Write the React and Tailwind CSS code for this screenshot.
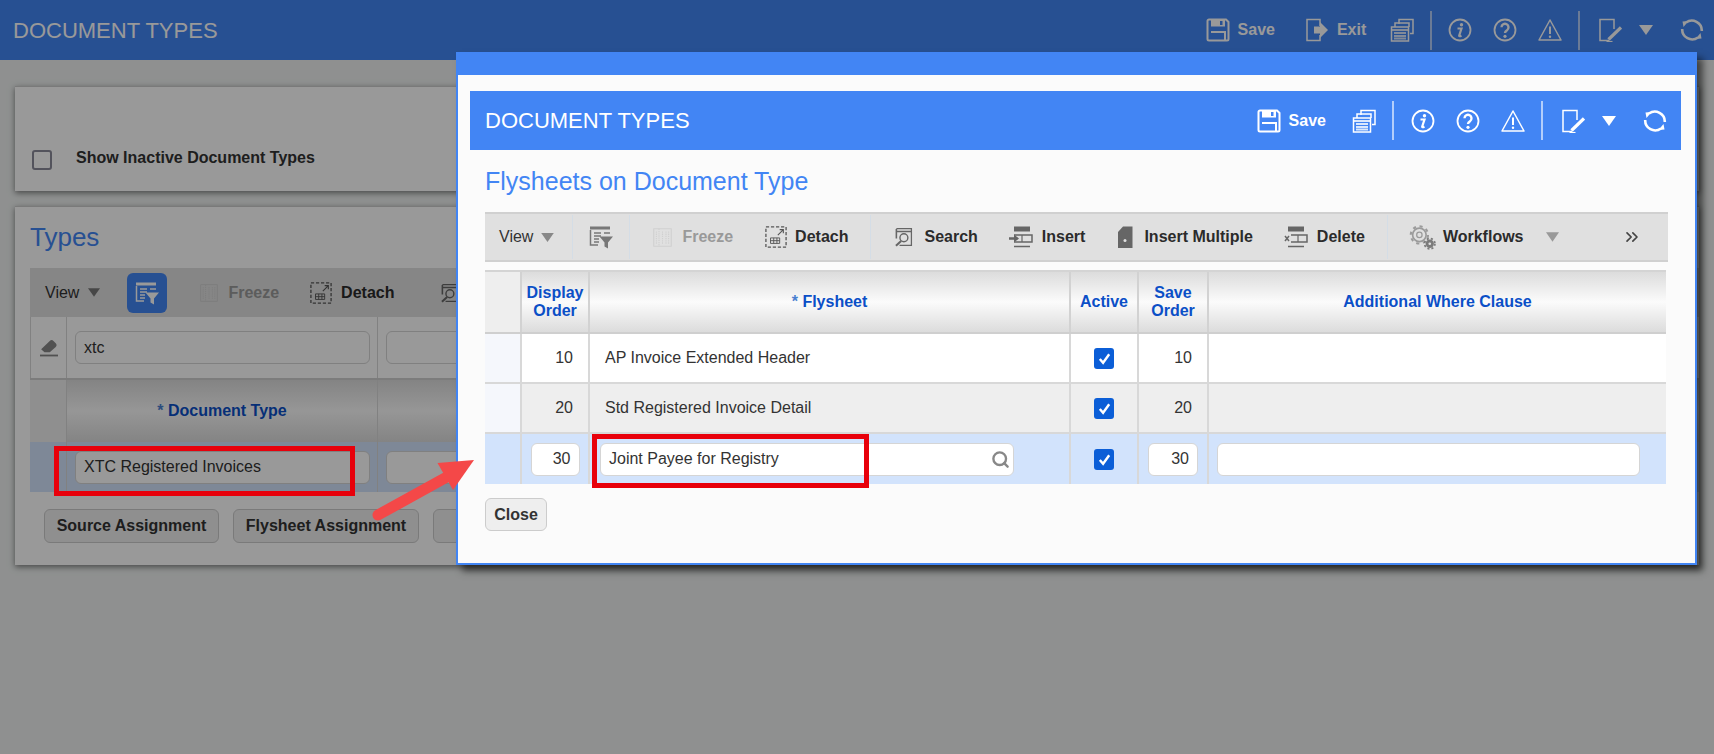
import React from 'react'
import { ChevronsRight, Search } from 'lucide-react'

const FloppyIcon = ({ className }) => (
  <svg viewBox="0 0 24 24" className={className} fill="none" stroke="currentColor">
    <path d="M1.5 3A1.5 1.5 0 0 1 3 1.5h17l2.5 2.5v17a1.5 1.5 0 0 1-1.5 1.5H3A1.5 1.5 0 0 1 1.5 21z" strokeWidth="2" />
    <path fillRule="evenodd" fill="currentColor" stroke="none" d="M5 1.5h14v7H5zM14 3v4h2.5V3z" />
    <path d="M5 14h14v8" strokeWidth="2" />
  </svg>
)

const ExitIcon = ({ className }) => (
  <svg viewBox="0 0 24 24" className={className} fill="none" stroke="currentColor">
    <path d="M15 8V1.5H2v21h13V17" strokeWidth="1.5" />
    <path d="M9 8.5h6V4l8 8-8 8v-4.500H9z" fill="currentColor" stroke="none" />
  </svg>
)

const PagesIcon = ({ className }) => (
  <svg viewBox="0 0 24 24" className={className} fill="none" stroke="currentColor" strokeWidth="1.5">
    <path d="M9 6V1.500h14v14h-3" />
    <path d="M5 9V5h14v4" />
    <path d="M1.500 9h17v14h-17z" />
    <path d="M1.500 12h17M4 15h12M4 18h12M4 20.500h12" strokeWidth="1.800" opacity="0.8" />
  </svg>
)

const InfoIcon = ({ className }) => (
  <svg viewBox="0 0 24 24" className={className} fill="none" stroke="currentColor">
    <circle cx="12" cy="12" r="10.500" strokeWidth="1.800" />
    <circle cx="13.500" cy="6.800" r="1.700" fill="currentColor" stroke="none" />
    <path d="M9.500 10.500h4l-2.300 7c-.2.8.5 1 2.300.2" strokeWidth="2.200" />
  </svg>
)

const HelpIcon = ({ className }) => (
  <svg viewBox="0 0 24 24" className={className} fill="none" stroke="currentColor">
    <circle cx="12" cy="12" r="10.500" strokeWidth="1.800" />
    <path d="M8.500 9.200a3.500 3.500 0 1 1 5.500 3c-1.400.9-2 1.500-2 2.800" strokeWidth="2.400" />
    <circle cx="12" cy="18.300" r="1.600" fill="currentColor" stroke="none" />
  </svg>
)

const WarningIcon = ({ className }) => (
  <svg viewBox="0 0 24 24" className={className} fill="none" stroke="currentColor">
    <path d="M12 2 23 22H1z" strokeWidth="1.500" strokeLinejoin="round" />
    <path d="M12 8.500v7.500" strokeWidth="2" />
    <circle cx="12" cy="18.800" r="1.200" fill="currentColor" stroke="none" />
  </svg>
)

const NoteEditIcon = ({ className }) => (
  <svg viewBox="0 0 24 24" className={className} fill="none" stroke="currentColor">
    <path d="M16 11V1.500H2v21h9" strokeWidth="1.500" />
    <path d="M23 9.500 10.500 21.500" strokeWidth="3.200" />
    <path d="M8.500 23.500h6" strokeWidth="1.200" />
  </svg>
)

const RefreshIcon = ({ className }) => (
  <svg viewBox="0 0 24 24" className={className} fill="none" stroke="currentColor">
    <path d="M6 4.500A10 10 0 0 1 21.800 13" strokeWidth="2.600" />
    <path d="M18 19.500A10 10 0 0 1 2.200 11" strokeWidth="2.600" />
    <path d="M2.500 3.500 8.500 3 3.500 9zM21.500 20.500l-6 .5 5-6z" fill="currentColor" stroke="none" />
  </svg>
)

const TableFilterIcon = ({ className }) => (
  <svg viewBox="0 0 24 24" className={className} fill="none" stroke="currentColor">
    <path d="M1 1.500h20v3H1z" fill="currentColor" stroke="none" />
    <path d="M1.500 5v15H9M5 8h7M5 11h7M5 14h5M5 17h5M15 8h6" strokeWidth="1.500" />
    <path d="M10.500 11.500H24l-5 6v6l-3.500-2v-4z" fill="currentColor" stroke="none" />
  </svg>
)

const FreezeIcon = ({ className }) => (
  <svg viewBox="0 0 24 24" className={className} fill="none" stroke="currentColor" strokeWidth="1.200">
    <path d="M2 2h20v20H2z" />
    <path d="M8 2v20M12 5v14M16 5v14M5 5v14M19 5v14" strokeDasharray="1.500 1" />
  </svg>
)

const DetachIcon = ({ className }) => (
  <svg viewBox="0 0 24 24" className={className} fill="none" stroke="currentColor">
    <path d="M1 1h22v22H1z" strokeWidth="1.400" strokeDasharray="3.500 2" />
    <path d="M6 13h10v6H6zM6 16h10M9.500 13v6M13 13v6" strokeWidth="1" />
    <path d="M14 10l6-6M16 4h4v4" strokeWidth="1.200" />
  </svg>
)

const SearchDocIcon = ({ className }) => (
  <svg viewBox="0 0 24 24" className={className} fill="none" stroke="currentColor">
    <path d="M3 1.500h19v21H7" strokeWidth="1.600" />
    <path d="M3 2v12M3 5h19" strokeWidth="2" />
    <circle cx="12.500" cy="13" r="5" strokeWidth="1.800" />
    <path d="M9 17 2.500 23" strokeWidth="2.600" />
  </svg>
)

const InsertIcon = ({ className }) => (
  <svg viewBox="0 0 24 24" className={className} fill="none" stroke="currentColor">
    <path d="M5 1.500h16v5H5z" fill="currentColor" stroke="none" />
    <path d="M5 10h18v7H5M5 21.500h16" strokeWidth="1.500" />
    <path d="M13 10v7" strokeWidth="1.200" />
    <path d="M0 12.300h5V9.500l5 4-5 4v-2.700H0z" fill="currentColor" stroke="none" />
  </svg>
)

const InsertMultipleIcon = ({ className }) => (
  <svg viewBox="0 0 16 24" className={className}>
    <path d="M1 7 6 1.500h9.500V23H1z" fill="currentColor" />
    <circle cx="8" cy="15.500" r="1.500" fill="#e0e0e0" />
  </svg>
)

const DeleteIcon = ({ className }) => (
  <svg viewBox="0 0 24 24" className={className} fill="none" stroke="currentColor">
    <path d="M4 1.500h16v5H4z" fill="currentColor" stroke="none" />
    <path d="M7 10h16v7H7M4 21.500h16" strokeWidth="1.500" />
    <path d="M14 10v7" strokeWidth="1.200" />
    <path d="M1 11l4 5M5 11l-4 5" strokeWidth="1.500" />
  </svg>
)

const GearsIcon = ({ className }) => (
  <svg viewBox="0 0 26 24" className={className} fill="none">
    <circle cx="10" cy="9.500" r="6.500" stroke="#9b9b9b" strokeWidth="1.600" />
    <circle cx="10" cy="9.500" r="8.300" stroke="#9b9b9b" strokeWidth="2" strokeDasharray="3 3.500" />
    <circle cx="10" cy="9.500" r="2.600" stroke="#9b9b9b" strokeWidth="1.200" />
    <circle cx="20" cy="18" r="4" fill="#7b7b7b" />
    <circle cx="20" cy="18" r="5" stroke="#7b7b7b" strokeWidth="1.600" strokeDasharray="2 2" />
    <circle cx="20" cy="18" r="1.300" fill="#e0e0e0" />
  </svg>
)

const EraserIcon = ({ className }) => (
  <svg viewBox="0 0 24 24" className={className}>
    <path d="M13 2.500c1.500-1.500 3.500-1.500 5 0l3 3c1.500 1.500 1.500 3.500 0 5l-8 7H6l-4.500-4z" fill="currentColor" />
    <path d="M0 22h24" stroke="currentColor" strokeWidth="2.400" />
  </svg>
)

const CheckBox = () => (
  <div className="w-5 h-[21px] rounded-[3px] bg-[#0b5ed7] flex items-center justify-center">
    <svg viewBox="0 0 16 16" className="w-[15px] h-[15px]" fill="none" stroke="#ffffff" strokeWidth="2.600">
      <path d="M3 8.500 6.500 12.500 13 3.500" />
    </svg>
  </div>
)

const Caret = ({ className }) => (
  <svg viewBox="0 0 14 10" className={className}>
    <path d="M0 0h14L7 10z" fill="currentColor" />
  </svg>
)

const Divider = ({ className }) => <div className={`w-0.5 h-[39px] bg-white/60 ${className}`} />

const TextBox = ({ className, children }) => (
  <div className={`h-[33px] bg-white border border-[#d5d5d5] rounded-md flex items-center text-[16px] text-[#333333] ${className}`}>
    {children}
  </div>
)

const ToolLabel = ({ className, children }) => (
  <span className={`text-[16px] font-bold whitespace-nowrap ${className}`}>{children}</span>
)

const ToolSep = ({ className }) => <div className={`w-px h-[44px] bg-[#d4dde6] ${className}`} />

const headCell = 'h-full flex items-center justify-center text-center text-[16px] leading-[18px] font-bold text-[#0b4fc7] border-r-2 border-[#d2d2d2]'
const headBg = 'bg-gradient-to-b from-[#dcdcdc] via-[#fbfbfb] to-[#dcdcdc]'
const cell = 'h-full flex items-center text-[16px] text-[#333333] border-r-2 border-[#d8d8d8]'

const ModalRow = ({ bg, first, order, name, save }) => (
  <div className={`grid grid-cols-[37px_68px_481px_68px_70px_1fr] h-[50px] border-b-2 border-[#d8d8d8] ${bg}`}>
    <div className={`${cell} ${first}`} />
    <div className={`${cell} justify-end pr-[15px]`}>{order}</div>
    <div className={`${cell} pl-[15px]`}>{name}</div>
    <div className={`${cell} justify-center`}><CheckBox /></div>
    <div className={`${cell} justify-end pr-[15px]`}>{save}</div>
    <div className="h-full" />
  </div>
)

const Modal = () => (
  <div className="absolute left-[456px] top-[52px] w-[241px] min-w-[1241px] h-[513px] bg-[#fbfbfb] border-x-2 border-b-2 border-[#4285f4] shadow-[6px_6px_7px_rgba(0,0,0,0.55)]">
    <div className="h-[23px] -mx-0.5 bg-[#4285f4]" />
    <div className="pl-3 pt-4">
      <div className="w-[1211px] h-[59px] bg-[#4285f4] text-white flex items-center">
        <h1 className="ml-[15px] text-[22px] text-white">DOCUMENT TYPES</h1>
        <FloppyIcon className="ml-[567px] w-6 h-6" />
        <ToolLabel className="ml-2">Save</ToolLabel>
        <PagesIcon className="ml-[26px] w-6 h-6" />
        <Divider className="ml-4" />
        <InfoIcon className="ml-[17px] w-6 h-6" />
        <HelpIcon className="ml-[21px] w-6 h-6" />
        <WarningIcon className="ml-[21px] w-6 h-6" />
        <Divider className="ml-4" />
        <NoteEditIcon className="ml-[18px] w-6 h-6" />
        <Caret className="ml-[17px] w-[14px] h-[10px]" />
        <RefreshIcon className="ml-[27px] w-6 h-6" />
      </div>
      <div className="pl-[15px]">
        <h2 className="mt-[15px] h-8 text-[25px] leading-8 text-[#4285f4]">Flysheets on Document Type</h2>
        <div className="mt-[15px] w-[1183px] h-[50px] bg-[#e0e0e0] border-y-2 border-[#d0d0d0] flex items-center text-[#2b2b2b]">
          <span className="ml-[14px] text-[16px] text-[#333333]">View</span>
          <Caret className="ml-[8px] w-[13px] h-[9px] text-[#888888]" />
          <ToolSep className="ml-[18px]" />
          <TableFilterIcon className="ml-4 w-6 h-6 text-[#777777]" />
          <ToolSep className="ml-4" />
          <FreezeIcon className="ml-[22px] w-[21px] h-[21px] text-[#d0d0d0]" />
          <ToolLabel className="ml-[9px] text-[#999999]">Freeze</ToolLabel>
          <DetachIcon className="ml-8 w-[22px] h-[22px] text-[#555555]" />
          <ToolLabel className="ml-2">Detach</ToolLabel>
          <ToolSep className="ml-[22px]" />
          <SearchDocIcon className="ml-[23px] w-[19px] h-[22px] text-[#666666]" />
          <ToolLabel className="ml-[11px]">Search</ToolLabel>
          <InsertIcon className="ml-[31px] w-6 h-6 text-[#666666]" />
          <ToolLabel className="ml-[9px]">Insert</ToolLabel>
          <InsertMultipleIcon className="ml-[32px] w-4 h-6 text-[#666666]" />
          <ToolLabel className="ml-[11px]">Insert Multiple</ToolLabel>
          <DeleteIcon className="ml-[31px] w-6 h-6 text-[#666666]" />
          <ToolLabel className="ml-[9px]">Delete</ToolLabel>
          <ToolSep className="ml-[22px]" />
          <GearsIcon className="ml-[21px] w-[27px] h-[25px]" />
          <ToolLabel className="ml-[7px]">Workflows</ToolLabel>
          <Caret className="ml-[22px] w-[13px] h-[10px] text-[#999999]" />
          <ChevronsRight className="ml-[63px] w-[20px] h-[20px] text-[#444444]" />
        </div>
        <div className="mt-2 w-[1181px] border-t-2 border-[#d4d4d4]">
          <div className={`grid grid-cols-[37px_68px_481px_68px_70px_1fr] h-[62px] border-b-2 border-[#cfcfcf] ${headBg}`}>
            <div className={`${headCell} bg-[#eeeeee]`} />
            <div className={headCell}>Display<br />Order</div>
            <div className={headCell}><span><span className="text-[#4a7fd0]">* </span>Flysheet</span></div>
            <div className={headCell}>Active</div>
            <div className={headCell}>Save<br />Order</div>
            <div className="h-full flex items-center justify-center text-[16px] font-bold text-[#0b4fc7]">Additional Where Clause</div>
          </div>
          <ModalRow bg="bg-white" first="bg-[#f5f7fc]" order="10" name="AP Invoice Extended Header" save="10" />
          <ModalRow bg="bg-[#eeeeee]" first="bg-[#f5f7fc]" order="20" name="Std Registered Invoice Detail" save="20" />
          <div className="grid grid-cols-[37px_68px_481px_68px_70px_1fr] h-[50px] bg-[#d2e3fc]">
            <div className={cell} />
            <div className={`${cell} justify-center`}>
              <TextBox className="w-[49px] justify-end pr-2">30</TextBox>
            </div>
            <div className={`${cell} pl-2.5`}>
              <TextBox className="w-[414px] pl-2 justify-between pr-[3px]">
                <span>Joint Payee for Registry</span>
                <Search className="w-[19px] h-[19px] text-[#888888]" strokeWidth={3} />
              </TextBox>
            </div>
            <div className={`${cell} justify-center`}><CheckBox /></div>
            <div className={`${cell} justify-center`}>
              <TextBox className="w-[50px] justify-end pr-2">30</TextBox>
            </div>
            <div className="h-full flex items-center pl-2">
              <TextBox className="w-[423px]" />
            </div>
          </div>
        </div>
        <button className="mt-[14px] w-[62px] h-[33px] bg-[#eeeeee] border border-[#cccccc] rounded-md text-[16px] font-bold text-[#333333]">Close</button>
      </div>
    </div>
  </div>
)

// page behind the dialog
const Page = () => (
  <div className="h-full flex flex-col bg-[#eef1f0]">
    <div className="h-[60px] shrink-0 bg-[#4285f4] text-white flex items-center">
      <h1 className="ml-[13px] text-[22px]">DOCUMENT TYPES</h1>
      <FloppyIcon className="ml-[988px] w-6 h-6" />
      <ToolLabel className="ml-2">Save</ToolLabel>
      <ExitIcon className="ml-[30px] w-6 h-6" />
      <ToolLabel className="ml-2">Exit</ToolLabel>
      <PagesIcon className="ml-6 w-6 h-6" />
      <Divider className="ml-4" />
      <InfoIcon className="ml-4 w-6 h-6" />
      <HelpIcon className="ml-[21px] w-6 h-6" />
      <WarningIcon className="ml-[21px] w-6 h-6" />
      <Divider className="ml-4" />
      <NoteEditIcon className="ml-[18px] w-6 h-6" />
      <Caret className="ml-[17px] w-[14px] h-[10px]" />
      <RefreshIcon className="ml-[27px] w-6 h-6" />
    </div>
    <div className="mx-[15px] mt-[26px] h-[105px] bg-white border-t border-[#cccccc] shadow-[0_2px_6px_rgba(0,0,0,0.5)] flex items-end pb-[21px] pl-[17px]">
      <div className="w-5 h-5 rounded-[3px] border-2 border-[#8a8a9a]" />
      <span className="ml-6 text-[16px] font-bold text-[#333333]">Show Inactive Document Types</span>
    </div>
    <div className="mx-[15px] mt-[15px] h-[359px] bg-white border-t border-[#cccccc] shadow-[0_2px_6px_rgba(0,0,0,0.5)] pl-[15px]">
      <h2 className="mt-[13px] h-[34px] text-[26px] leading-[34px] text-[#4285f4]">Types</h2>
      <div className="mt-[14px] h-[49px] bg-[#e0e0e0] flex items-center text-[#2b2b2b]">
        <span className="ml-[15px] text-[16px] text-[#333333]">View</span>
        <Caret className="ml-[9px] w-[12px] h-[9px] text-[#777777]" />
        <div className="ml-[27px] w-10 h-10 rounded-md bg-[#4285f4] flex items-center justify-center text-white">
          <TableFilterIcon className="w-6 h-6" />
        </div>
        <FreezeIcon className="ml-8 w-5 h-5 text-[#d0d0d0]" />
        <ToolLabel className="ml-[9px] text-[#999999]">Freeze</ToolLabel>
        <DetachIcon className="ml-[31px] w-[22px] h-[22px] text-[#555555]" />
        <ToolLabel className="ml-[9px]">Detach</ToolLabel>
        <SearchDocIcon className="ml-[46px] w-[19px] h-[22px] text-[#666666]" />
      </div>
      <div className="grid grid-cols-[37px_311px_1fr] h-[63px] border-b-2 border-[#cfcfcf]">
        <div className="h-full border-x border-[#d8d8d8] flex items-center justify-center text-[#888888]">
          <EraserIcon className="w-[18px] h-[18px]" />
        </div>
        <div className="h-full border-r border-[#d8d8d8] flex items-center pl-2">
          <TextBox className="w-[295px] pl-2">xtc</TextBox>
        </div>
        <div className="h-full flex items-center pl-2">
          <TextBox className="w-[300px]" />
        </div>
      </div>
      <div className={`grid grid-cols-[37px_311px_1fr] h-[62px] ${headBg}`}>
        <div className="h-full bg-[#eeeeee] border-r border-[#d8d8d8]" />
        <div className="h-full border-r border-[#d8d8d8] flex items-center justify-center text-[16px] font-bold text-[#0b4fc7]">
          <span><span className="text-[#4a7fd0]">* </span>Document Type</span>
        </div>
        <div className="h-full" />
      </div>
      <div className="grid grid-cols-[37px_311px_1fr] h-[50px] bg-[#d2e3fc]">
        <div className="h-full border-r border-[#d8d8d8]" />
        <div className="h-full border-r border-[#d8d8d8] flex items-center pl-2">
          <TextBox className="w-[295px] pl-2">XTC Registered Invoices</TextBox>
        </div>
        <div className="h-full flex items-center pl-2">
          <TextBox className="w-[300px]" />
        </div>
      </div>
      <div className="mt-[17px] ml-3.5 flex gap-[14px] text-[16px] font-bold text-[#333333]">
        <button className="w-[175px] h-[34px] bg-[#eeeeee] border border-[#cccccc] rounded-md">Source Assignment</button>
        <button className="w-[186px] h-[34px] bg-[#eeeeee] border border-[#cccccc] rounded-md">Flysheet Assignment</button>
        <button className="w-[120px] h-[34px] bg-[#eeeeee] border border-[#cccccc] rounded-md" />
      </div>
    </div>
  </div>
)

export default function App() {
  return (
    <div className="relative w-[1714px] h-[754px] overflow-hidden font-['Liberation_Sans',Arial,sans-serif]">
      <Page />
      <div className="absolute inset-0 bg-black/40" />
      <Modal />
      {/* callouts drawn over the screenshot */}
      <div className="absolute left-[54px] top-[446px] w-[301px] h-[50px] border-[5px] border-[#e8000b]" />
      <div className="absolute left-[592px] top-[434px] w-[277px] h-[54px] border-[5px] border-[#e8000b]" />
      <svg className="absolute left-[365px] top-[452px] w-[115px] h-[75px]" viewBox="0 0 115 75">
        <path d="M13 63 80 26" stroke="#f44848" strokeWidth="11" strokeLinecap="round" />
        <path d="M109 8 72.500 11 88 38z" fill="#f44848" />
      </svg>
    </div>
  )
}
